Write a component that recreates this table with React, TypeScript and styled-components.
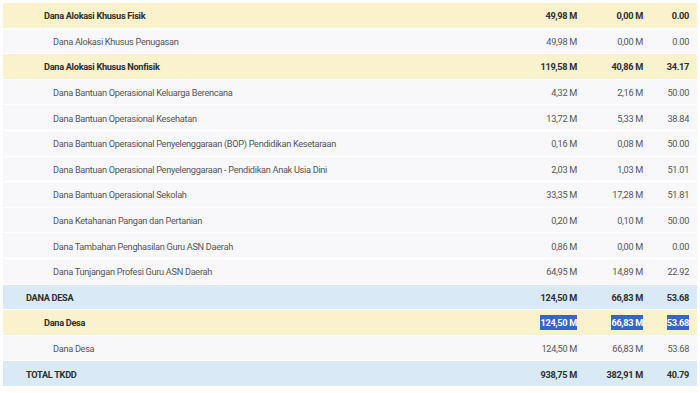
import React from "react";
import styled, { createGlobalStyle } from "styled-components";

const Global = createGlobalStyle`
  html, body { margin: 0; padding: 0; background: #ffffff; }
  body { font-family: "Source Sans Pro", Roboto, "Liberation Sans", sans-serif; }
`;

type Kind = "section" | "group" | "item";

interface RowData {
  label: string;
  kind: Kind;
  a: string;
  b: string;
  c: string;
  selected?: boolean;
}

const rows: RowData[] = [
  { label: "Dana Alokasi Khusus Fisik", kind: "group", a: "49,98 M", b: "0,00 M", c: "0.00" },
  { label: "Dana Alokasi Khusus Penugasan", kind: "item", a: "49,98 M", b: "0,00 M", c: "0.00" },
  { label: "Dana Alokasi Khusus Nonfisik", kind: "group", a: "119,58 M", b: "40,86 M", c: "34.17" },
  { label: "Dana Bantuan Operasional Keluarga Berencana", kind: "item", a: "4,32 M", b: "2,16 M", c: "50.00" },
  { label: "Dana Bantuan Operasional Kesehatan", kind: "item", a: "13,72 M", b: "5,33 M", c: "38.84" },
  { label: "Dana Bantuan Operasional Penyelenggaraan (BOP) Pendidikan Kesetaraan", kind: "item", a: "0,16 M", b: "0,08 M", c: "50.00" },
  { label: "Dana Bantuan Operasional Penyelenggaraan - Pendidikan Anak Usia Dini", kind: "item", a: "2,03 M", b: "1,03 M", c: "51.01" },
  { label: "Dana Bantuan Operasional Sekolah", kind: "item", a: "33,35 M", b: "17,28 M", c: "51.81" },
  { label: "Dana Ketahanan Pangan dan Pertanian", kind: "item", a: "0,20 M", b: "0,10 M", c: "50.00" },
  { label: "Dana Tambahan Penghasilan Guru ASN Daerah", kind: "item", a: "0,86 M", b: "0,00 M", c: "0.00" },
  { label: "Dana Tunjangan Profesi Guru ASN Daerah", kind: "item", a: "64,95 M", b: "14,89 M", c: "22.92" },
  { label: "DANA DESA", kind: "section", a: "124,50 M", b: "66,83 M", c: "53.68" },
  { label: "Dana Desa", kind: "group", a: "124,50 M", b: "66,83 M", c: "53.68", selected: true },
  { label: "Dana Desa", kind: "item", a: "124,50 M", b: "66,83 M", c: "53.68" },
  { label: "TOTAL TKDD", kind: "section", a: "938,75 M", b: "382,91 M", c: "40.79" },
];

const bg: Record<Kind, string> = {
  section: "#d9eaf6",
  group: "#faf1cd",
  item: "#f8f8fa",
};

const indent: Record<Kind, number> = {
  section: 23,
  group: 41,
  item: 50,
};

const Page = styled.div`
  padding: 3px 3px 6px 3px;
`;

const Table = styled.div`
  display: flex;
  flex-direction: column;
`;

const Row = styled.div<{ $kind: Kind }>`
  display: grid;
  grid-template-columns: 1fr 100px 66px 46px;
  height: 25.6px;
  box-sizing: border-box;
  align-items: center;
  padding-top: 1px;
  background: ${(p) => bg[p.$kind]};
  border-bottom: 1px solid #ffffff;
  font-size: 9.2px;
  letter-spacing: -0.3px;
  font-weight: ${(p) => (p.$kind === "item" ? 400 : 700)};
  color: ${(p) => (p.$kind === "item" ? "#555558" : "#2e2e2e")};
`;

const Label = styled.div<{ $kind: Kind }>`
  padding-left: ${(p) => indent[p.$kind]}px;
  white-space: nowrap;
`;

const Num = styled.div`
  text-align: right;
  padding-right: 8px;
  white-space: nowrap;
`;

const Sel = styled.span<{ $on?: boolean }>`
  background: ${(p) => (p.$on ? "#3366cc" : "transparent")};
  color: ${(p) => (p.$on ? "#ffffff" : "inherit")};
  padding: 2px 0;
`;

export default function App() {
  return (
    <>
      <Global />
      <Page>
        <Table>
          {rows.map((r, i) => (
            <Row key={i} $kind={r.kind}>
              <Label $kind={r.kind}>{r.label}</Label>
              <Num>
                <Sel $on={r.selected}>{r.a}</Sel>
              </Num>
              <Num>
                <Sel $on={r.selected}>{r.b}</Sel>
              </Num>
              <Num>
                <Sel $on={r.selected}>{r.c}</Sel>
              </Num>
            </Row>
          ))}
        </Table>
      </Page>
    </>
  );
}
